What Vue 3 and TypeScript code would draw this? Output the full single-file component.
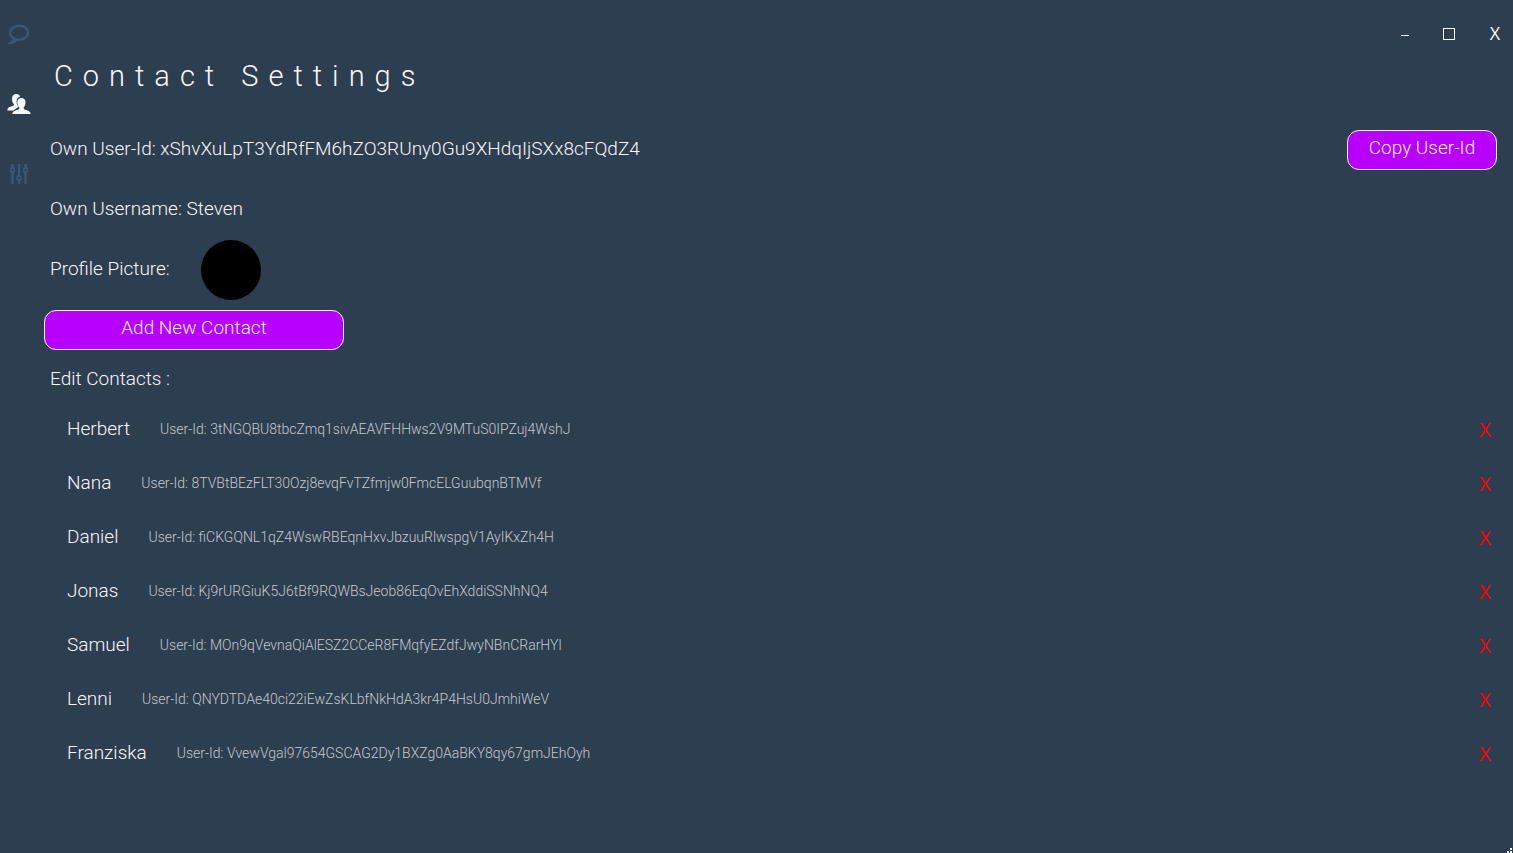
<script setup lang="ts">
interface Contact {
  name: string
  id: string
}

const ownId = 'xShvXuLpT3YdRfFM6hZO3RUny0Gu9XHdqIjSXx8cFQdZ4'

const contacts: Contact[] = [
  { name: 'Herbert', id: '3tNGQBU8tbcZmq1sivAEAVFHHws2V9MTuS0IPZuj4WshJ' },
  { name: 'Nana', id: '8TVBtBEzFLT30Ozj8evqFvTZfmjw0FmcELGuubqnBTMVf' },
  { name: 'Daniel', id: 'fiCKGQNL1qZ4WswRBEqnHxvJbzuuRlwspgV1AyIKxZh4H' },
  { name: 'Jonas', id: 'Kj9rURGiuK5J6tBf9RQWBsJeob86EqOvEhXddiSSNhNQ4' },
  { name: 'Samuel', id: 'MOn9qVevnaQiAlESZ2CCeR8FMqfyEZdfJwyNBnCRarHYl' },
  { name: 'Lenni', id: 'QNYDTDAe40ci22iEwZsKLbfNkHdA3kr4P4HsU0JmhiWeV' },
  { name: 'Franziska', id: 'VvewVgal97654GSCAG2Dy1BXZg0AaBKY8qy67gmJEhOyh' },
]
</script>

<template>
  <div class="window">
    <nav class="sidebar" aria-label="Main">
      <button class="nav" type="button" aria-label="Chats">
        <svg width="24" height="24" viewBox="0 0 24 24" fill="none" stroke="currentColor" stroke-width="2.4">
          <path d="M7.400 16.400C4.800 15.200 3.200 13.100 3.200 10.700C3.200 6.800 7 3.800 12.200 3.800S21 6.800 21 10.700S17.300 17.800 12.200 17.800C11.400 17.800 10.600 17.700 9.800 17.600C8.600 19.200 6.500 20.500 4 20.800C5.800 19.500 7.100 18.200 7.400 16.400Z" />
        </svg>
      </button>
      <button class="nav active" type="button" aria-label="Contacts">
        <svg width="24" height="24" viewBox="0 0 24 24" fill="currentColor">
          <path d="M9.200 2C11 2 12.500 2.700 13.100 4.400C10.600 5.200 9.400 7.300 9.600 10C9.700 12 10.400 13.600 11.500 14.700C10.700 15.800 8.500 16.300 6.800 18.500H.3C.2 16 2 15.200 4.200 14.500C6 13.900 7 13.500 7.100 12.500C5.500 10.900 4.900 9 5 6.500C5.100 3.500 6.600 2 9.200 2Z" />
          <path d="M14.400 5.900C17.200 5.900 18.500 7.600 18.500 10.200C18.500 12.400 17.800 14.300 16.700 15.400V16.500C17 17.500 18.600 17.900 20.300 18.400C22.400 19.100 23.700 20.200 23.700 22H5.200C5.200 20.200 6.500 19.100 8.600 18.400C10.300 17.900 11.900 17.500 12.200 16.500V15.400C11.100 14.300 10.300 12.400 10.300 10.200C10.300 7.600 11.600 5.900 14.400 5.900Z" />
        </svg>
      </button>
      <button class="nav" type="button" aria-label="Settings">
        <svg width="24" height="24" viewBox="0 0 24 24" fill="none" stroke="currentColor" stroke-width="2.400">
          <path d="M5.500 2V6M5.500 10V22M12 2V14M12 18V22M18.500 2V6M18.500 10V22" />
          <path d="M3.700 6.200H7.300V9.800H3.700ZM10.200 14.200H13.800V17.800H10.200ZM16.700 6.200H20.300V9.800H16.700Z" stroke-width="1.600" />
        </svg>
      </button>
    </nav>

    <main class="content">
      <header class="top">
        <h1>Contact Settings</h1>
        <div class="controls">
          <button type="button" aria-label="Minimize"><span class="minimize"></span></button>
          <button type="button" aria-label="Maximize"><span class="maximize"></span></button>
          <button class="close" type="button" aria-label="Close">X</button>
        </div>
      </header>

      <section class="profile">
        <div class="line">
          <span class="text">Own User-Id: {{ ownId }}</span>
          <button class="action copy" type="button">Copy User-Id</button>
        </div>
        <div class="line"><span class="text">Own Username: Steven</span></div>
        <div class="line">
          <span class="text">Profile Picture:</span>
          <span class="avatar" role="img" aria-label="Profile picture"></span>
        </div>
      </section>

      <button class="action add" type="button">Add New Contact</button>

      <h2>Edit Contacts :</h2>
      <ul class="contacts">
        <li v-for="contact in contacts" :key="contact.id">
          <span class="name">{{ contact.name }}</span>
          <span class="id">User-Id: {{ contact.id }}</span>
          <button class="remove" type="button" :aria-label="`Remove ${contact.name}`">X</button>
        </li>
      </ul>
    </main>
    <span class="grip" aria-hidden="true"></span>
  </div>
</template>

<style>
body {
  background: #2d3e50;
}
</style>

<style scoped>
.window {
  position: relative;
  display: flex;
  box-sizing: border-box;
  min-height: 100vh;
  background: #2d3e50;
  color: #f6f7ff;
  font: 300 19px/24px Roboto, Lato, sans-serif;
}

button {
  padding: 0;
  border: 0;
  background: none;
  color: inherit;
  font: inherit;
  cursor: pointer;
}

.sidebar {
  display: flex;
  flex-direction: column;
  flex: none;
  width: 38px;
}

.nav {
  display: grid;
  place-items: center;
  height: 70px;
  padding-bottom: 2px;
  color: #3b5776;
}

.nav.active {
  color: #f6f7ff;
}

.content {
  flex: 1;
  min-width: 0;
  padding-left: 6px;
}

.top {
  display: flex;
  justify-content: space-between;
  height: 120px;
}

h1 {
  margin: 56px 0 0 10px;
  font-size: 29px;
  font-weight: 300;
  line-height: 40px;
  letter-spacing: 10px;
}

.controls {
  display: flex;
  height: 68px;
}

.controls button {
  display: grid;
  place-items: center;
  width: 44px;
  padding-bottom: 2px;
  font: 400 18px/24px "Open Sans", sans-serif;
}

.controls .close {
  width: 36px;
  margin-left: 6px;
}

.minimize {
  width: 8px;
  height: 1px;
  margin-top: 4px;
  background: currentColor;
}

.maximize {
  box-sizing: border-box;
  width: 12px;
  height: 12px;
  margin-top: 2px;
  border: 1px solid currentColor;
}

.line {
  display: flex;
  align-items: center;
  height: 60px;
  padding: 0 16px 0 6px;
}

.text {
  padding-bottom: 2px;
}

.action {
  height: 40px;
  padding-bottom: 4px;
  border: 1px solid #f6f7ff;
  border-radius: 12px;
  background: #b700ff;
}

.copy {
  width: 150px;
  margin-left: auto;
}

.add {
  display: block;
  width: 300px;
  margin-top: 10px;
}

.avatar {
  width: 60px;
  height: 60px;
  margin-left: 31px;
  border-radius: 50%;
  background: #000;
}

h2 {
  margin: 17px 0 11px 6px;
  font-size: 19px;
  font-weight: 300;
  line-height: 24px;
}

.contacts {
  margin: 0;
  padding: 0;
  list-style: none;
}

.contacts li {
  display: flex;
  align-items: center;
  gap: 30px;
  height: 54px;
  padding: 0 16px 0 23px;
}

.id {
  color: #c3c9d3;
  font-size: 14px;
}

.remove {
  width: 24px;
  margin-left: auto;
  padding-top: 2px;
  color: #f00;
  font: 400 20px/24px "Open Sans", sans-serif;
}

.grip {
  position: absolute;
  right: 1px;
  bottom: 0;
  width: 2px;
  height: 2px;
  background: #f6f7ff;
  box-shadow: 0 -3px #f6f7ff, -3px 0 #f6f7ff;
}
</style>
